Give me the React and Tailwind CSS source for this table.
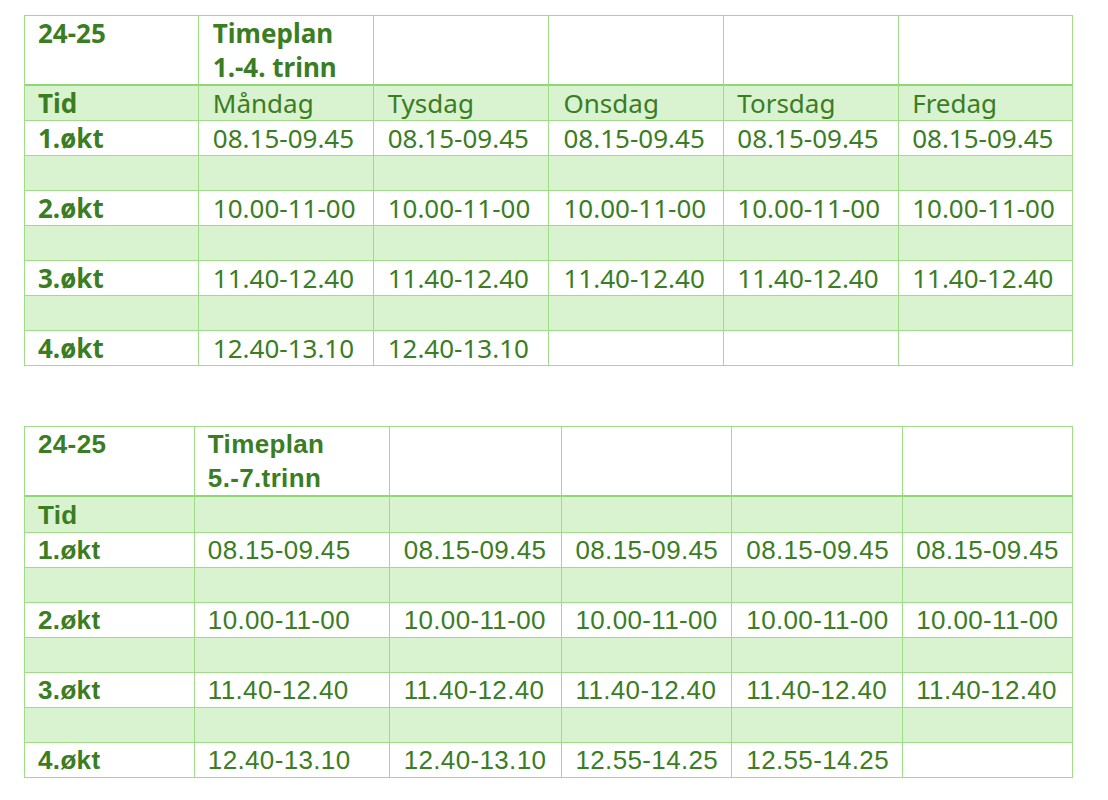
import React from "react";

const days = ["Måndag", "Tysdag", "Onsdag", "Torsdag", "Fredag"];

function Cell({ children, bold, band, h, w, pad = "pl-[14px]" }) {
  return (
    <div
      className={`flex items-center border-r border-b border-[#9fdc88] ${pad} ${band ? "bg-[#d9f2d0]" : "bg-white"} ${bold ? "font-bold" : "font-normal"} whitespace-nowrap`}
      style={{ height: h, width: w }}
    >
      {children}
    </div>
  );
}

function Table({ widths, font, header, tidRow, rows, tidH, headerH, pads, mt, track }) {
  return (
    <div
      className={`ml-[24px] w-[1049px] border-l border-t border-[#9fdc88] text-[26px] leading-[34px] text-[#3b7d23] ${mt} ${track}`}
      style={{ fontFamily: font }}
    >
      <div className="flex">
        {widths.map((w, i) => (
          <div
            key={i}
            className={`border-r border-b-2 border-r-[#9fdc88] border-b-[#8ed873] bg-white font-bold whitespace-nowrap ${pads[i]}`}
            style={{ width: w, height: headerH }}
          >
            {header[i] || null}
          </div>
        ))}
      </div>
      <div className="flex">
        {widths.map((w, i) => (
          <Cell key={i} band h={tidH} w={w} bold={i === 0} pad={pads[i]}>
            {tidRow[i]}
          </Cell>
        ))}
      </div>
      {rows.map((r, ri) => (
        <React.Fragment key={ri}>
          <div className="flex">
            {widths.map((w, i) => (
              <Cell key={i} h={35} w={w} bold={i === 0} pad={pads[i]}>
                {r[i]}
              </Cell>
            ))}
          </div>
          {ri < rows.length - 1 && (
            <div className="flex">
              {widths.map((w, i) => (
                <Cell key={i} band h={35} w={w} pad={pads[i]} />
              ))}
            </div>
          )}
        </React.Fragment>
      ))}
    </div>
  );
}

export default function App() {
  const t1rows = [
    ["1.økt", "08.15-09.45", "08.15-09.45", "08.15-09.45", "08.15-09.45", "08.15-09.45"],
    ["2.økt", "10.00-11-00", "10.00-11-00", "10.00-11-00", "10.00-11-00", "10.00-11-00"],
    ["3.økt", "11.40-12.40", "11.40-12.40", "11.40-12.40", "11.40-12.40", "11.40-12.40"],
    ["4.økt", "12.40-13.10", "12.40-13.10", "", "", ""],
  ];
  const t2rows = [
    ["1.økt", "08.15-09.45", "08.15-09.45", "08.15-09.45", "08.15-09.45", "08.15-09.45"],
    ["2.økt", "10.00-11-00", "10.00-11-00", "10.00-11-00", "10.00-11-00", "10.00-11-00"],
    ["3.økt", "11.40-12.40", "11.40-12.40", "11.40-12.40", "11.40-12.40", "11.40-12.40"],
    ["4.økt", "12.40-13.10", "12.40-13.10", "12.55-14.25", "12.55-14.25", ""],
  ];
  return (
    <div className="w-[1108px] h-[800px] bg-white overflow-hidden">
      <Table
        mt="mt-[15px]"
        track="tracking-normal"
        font={'"Noto Sans", "Open Sans", sans-serif'}
        widths={[174, 175, 176, 175, 175, 174]}
        pads={["pl-[13px]", "pl-[14px]", "pl-[14px]", "pl-[14px]", "pl-[13px]", "pl-[13px]"]}
        headerH={70}
        tidH={35}
        header={[
          "24-25",
          <>
            Timeplan
            <br />
            1.-4. trinn
          </>,
        ]}
        tidRow={["Tid", ...days]}
        rows={t1rows}
      />
      <Table
        mt="mt-[60px]"
        track="tracking-[0.35px]"
        font={'"Liberation Sans", Arial, sans-serif'}
        widths={[170, 195, 172, 171, 171, 170]}
        pads={["pl-[13px]", "pl-[13px]", "pl-[14px]", "pl-[14px]", "pl-[14px]", "pl-[13px]"]}
        headerH={70}
        tidH={36}
        header={[
          "24-25",
          <>
            Timeplan
            <br />
            5.-7.trinn
          </>,
        ]}
        tidRow={["Tid"]}
        rows={t2rows}
      />
    </div>
  );
}
